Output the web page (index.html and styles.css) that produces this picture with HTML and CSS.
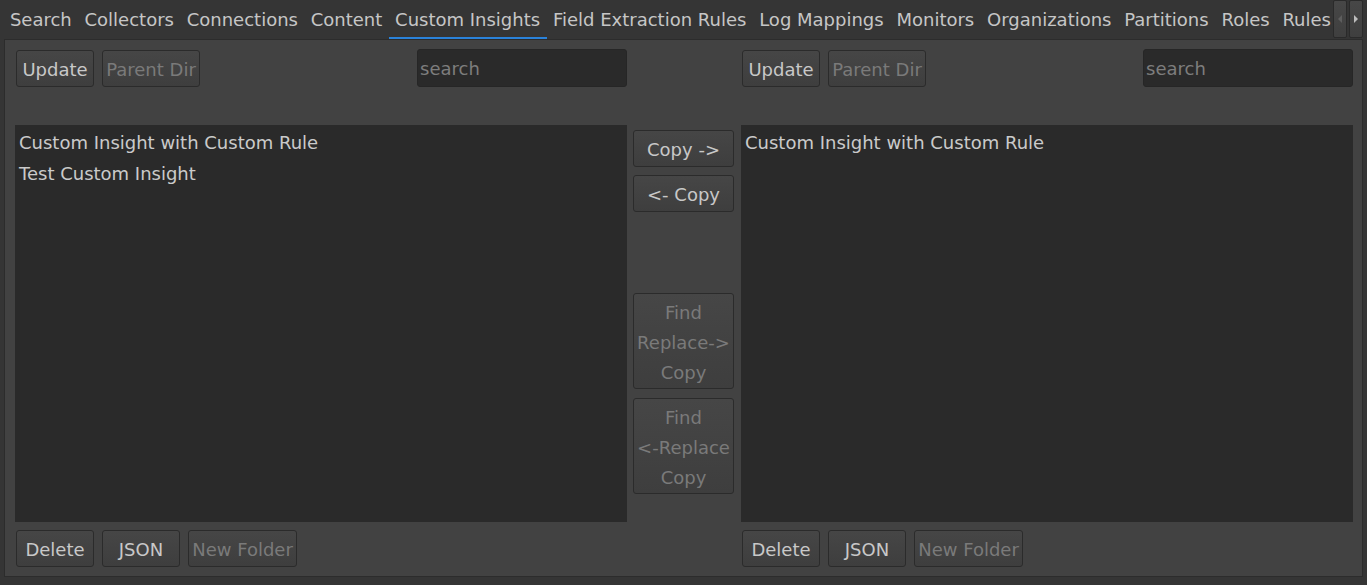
FILE: index.html
```html
<!DOCTYPE html>
<html>
<head>
<meta charset="utf-8">
<link rel="stylesheet" href="styles.css">
</head>
<body>
<div class="tabbar">
  <div class="tabs">
    <div class="tab">Search</div>
    <div class="tab">Collectors</div>
    <div class="tab">Connections</div>
    <div class="tab">Content</div>
    <div class="tab active">Custom Insights</div>
    <div class="tab">Field Extraction Rules</div>
    <div class="tab">Log Mappings</div>
    <div class="tab">Monitors</div>
    <div class="tab">Organizations</div>
    <div class="tab">Partitions</div>
    <div class="tab">Roles</div>
    <div class="tab last">Rules</div>
  </div>
  <div class="scrollers">
    <div class="scroll-btn"><svg width="6" height="10" viewBox="0 0 6 10"><path d="M5 1 L1 5 L5 9 Z" fill="#5e5e5e"/></svg></div>
    <div class="scroll-btn"><svg width="6" height="10" viewBox="0 0 6 10"><path d="M1 1 L5 5 L1 9 Z" fill="#bdbdbd"/></svg></div>
  </div>
</div>
<div class="pane">
  <div class="panel">
    <div class="toprow">
      <div class="btngroup">
        <button class="btn w78">Update</button>
        <button class="btn w98" disabled>Parent Dir</button>
      </div>
      <div class="search">search</div>
    </div>
    <div class="list">
      <div class="item">Custom Insight with Custom Rule</div>
      <div class="item">Test Custom Insight</div>
    </div>
    <div class="bottomrow">
      <button class="btn w78">Delete</button>
      <button class="btn w78">JSON</button>
      <button class="btn w109" disabled>New Folder</button>
    </div>
  </div>
  <div class="middle">
    <button class="btn mid">Copy -&gt;</button>
    <button class="btn mid gap8">&lt;- Copy</button>
    <button class="btn tall first-find" disabled>Find<br>Replace-&gt;<br>Copy</button>
    <button class="btn tall gap9" disabled>Find<br>&lt;-Replace<br>Copy</button>
  </div>
  <div class="panel">
    <div class="toprow">
      <div class="btngroup">
        <button class="btn w78">Update</button>
        <button class="btn w98" disabled>Parent Dir</button>
      </div>
      <div class="search">search</div>
    </div>
    <div class="list">
      <div class="item">Custom Insight with Custom Rule</div>
    </div>
    <div class="bottomrow">
      <button class="btn w78">Delete</button>
      <button class="btn w78">JSON</button>
      <button class="btn w109" disabled>New Folder</button>
    </div>
  </div>
</div>
</body>
</html>
```

FILE: styles.css
```css
* { box-sizing: border-box; }
html, body { margin: 0; padding: 0; }
body {
  width: 1367px;
  height: 585px;
  overflow: hidden;
  background: #353535;
  font-family: "DejaVu Sans", sans-serif;
  font-size: 18px;
  color: #c8c8c8;
}
.tabbar {
  display: flex;
  height: 39px;
}
.tabs {
  display: flex;
  width: 1333px;
  overflow: hidden;
  padding-left: 3.5px;
}
.tab {
  flex: none;
  padding: 0 6.4px;
  height: 39px;
  line-height: 40px;
  white-space: nowrap;
  color: #c6c6c6;
}
.tab.active {
  border-bottom: 2px solid #2a82da;
}
.tab.last { padding-right: 0; }
.scrollers {
  display: flex;
  gap: 2px;
  height: 39px;
}
.scroll-btn {
  width: 14px;
  height: 38px;
  border: 1px solid #2a2a2a;
  border-radius: 2px;
  background: linear-gradient(#474747, #3f3f3f);
  display: flex;
  align-items: center;
  justify-content: center;
}
.pane {
  margin: 0 4px;
  height: 538px;
  border: 1px solid #2c2c2c;
  background: #424242;
  display: flex;
  padding: 9px 9px 0 10px;
}
.panel {
  width: 612px;
  display: flex;
  flex-direction: column;
}
.toprow {
  height: 38px;
  display: flex;
  justify-content: space-between;
  align-items: flex-start;
}
.btngroup {
  display: flex;
  gap: 8px;
  padding-left: 1px;
  padding-top: 1px;
}
.btn {
  height: 37px;
  border: 1px solid #2b2b2b;
  border-radius: 3px;
  background: linear-gradient(#464646, #3e3e3e);
  color: #c8c8c8;
  font-family: "DejaVu Sans", sans-serif;
  font-size: 18px;
  padding: 2px 0 0 0;
  margin: 0;
  white-space: nowrap;
}
.btn:disabled { color: #7a7a7a; }
.w78 { width: 78px; }
.w98 { width: 98px; }
.w109 { width: 109px; }
.search {
  width: 210px;
  height: 38px;
  background: #2a2a2a;
  border-radius: 3px;
  border: 1px solid #262626;
  color: #7d7d7d;
  line-height: 38px;
  padding-left: 2px;
}
.list {
  margin-top: 38px;
  height: 397px;
  background: #2a2a2a;
  padding-top: 2px;
}
.item {
  height: 31px;
  line-height: 31px;
  padding-left: 4px;
  color: #cacaca;
}
.bottomrow {
  display: flex;
  gap: 8px;
  margin-top: 8px;
  padding-left: 1px;
}
.middle {
  width: 114px;
  padding: 81px 7px 0 6px;
  display: flex;
  flex-direction: column;
}
.mid { width: 101px; height: 37px; }
.gap8 { margin-top: 8px; }
.tall {
  width: 101px;
  height: 96px;
  line-height: 30px;
  padding-top: 3px;
}
.first-find { margin-top: 81px; }
.gap9 { margin-top: 9px; }
```
